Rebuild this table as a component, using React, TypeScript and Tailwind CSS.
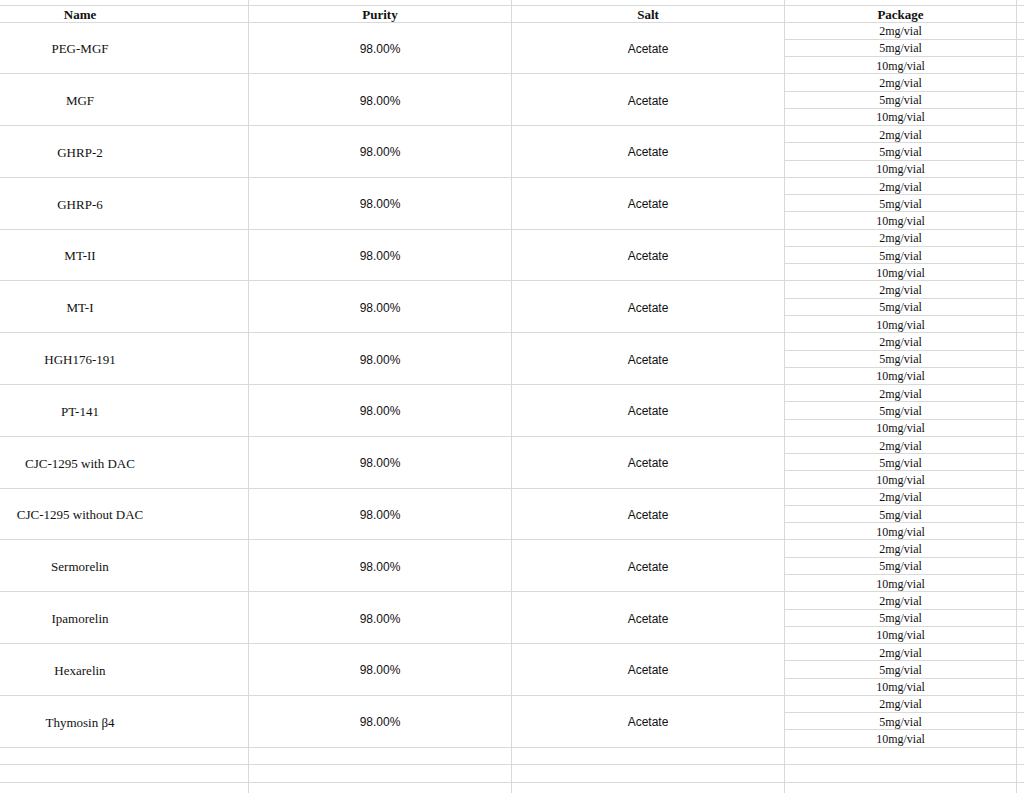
import React from "react";

const products = [
  "PEG-MGF",
  "MGF",
  "GHRP-2",
  "GHRP-6",
  "MT-II",
  "MT-I",
  "HGH176-191",
  "PT-141",
  "CJC-1295 with DAC",
  "CJC-1295 without DAC",
  "Sermorelin",
  "Ipamorelin",
  "Hexarelin",
  "Thymosin β4",
];

const packages = ["2mg/vial", "5mg/vial", "10mg/vial"];

const serif = "font-['Liberation_Serif','Times_New_Roman',serif]";
const sans = "font-['Liberation_Sans',Arial,sans-serif]";

function EmptyRow({ h }: { h: string }) {
  return (
    <div className={`flex ${h}`}>
      <div className="w-[249px] border-r border-b border-[#d9d9d9]" />
      <div className="w-[263px] border-r border-b border-[#d9d9d9]" />
      <div className="w-[273px] border-r border-b border-[#d9d9d9]" />
      <div className="w-[232px] border-r border-b border-[#d9d9d9]" />
      <div className="flex-1 border-b border-[#d9d9d9]" />
    </div>
  );
}

export default function App() {
  return (
    <div className="w-[1024px] h-[793px] overflow-hidden bg-white text-[#111]">
      <EmptyRow h="h-[6px]" />

      <div className={`flex h-[16.5px] ${serif} text-[13px] font-bold leading-none`}>
        <div className="w-[249px] border-r border-b border-[#d9d9d9] flex items-center pt-[2px]">
          <div className="w-[160px] text-center">Name</div>
        </div>
        <div className="w-[263px] border-r border-b border-[#d9d9d9] flex items-center justify-center pt-[2px]">Purity</div>
        <div className="w-[273px] border-r border-b border-[#d9d9d9] flex items-center justify-center pt-[2px]">Salt</div>
        <div className="w-[232px] border-r border-b border-[#d9d9d9] flex items-center justify-center pt-[2px]">Package</div>
        <div className="flex-1 border-b border-[#d9d9d9]" />
      </div>

      {products.map((name) => (
        <div key={name} className="flex">
          <div className={`w-[249px] border-r border-b border-[#d9d9d9] flex items-center pt-[2px] ${serif} text-[13px]`}>
            <div className="w-[160px] text-center">{name}</div>
          </div>
          <div className={`w-[263px] border-r border-b border-[#d9d9d9] flex items-center justify-center pt-[2px] ${sans} text-[12px]`}>
            98.00%
          </div>
          <div className={`w-[273px] border-r border-b border-[#d9d9d9] flex items-center justify-center pt-[2px] ${sans} text-[12px]`}>
            Acetate
          </div>
          <div className={`w-[232px] border-r border-[#d9d9d9] flex flex-col ${serif} text-[12px] leading-none`}>
            {packages.map((p) => (
              <div key={p} className="h-[17.27px] border-b border-[#d9d9d9] flex items-center justify-center pt-[1px]">
                {p}
              </div>
            ))}
          </div>
          <div className="flex-1 flex flex-col">
            {packages.map((p) => (
              <div key={p} className="h-[17.27px] border-b border-[#d9d9d9]" />
            ))}
          </div>
        </div>
      ))}

      <EmptyRow h="h-[17.5px]" />
      <EmptyRow h="h-[17.5px]" />
      <EmptyRow h="h-[17.5px]" />
    </div>
  );
}
